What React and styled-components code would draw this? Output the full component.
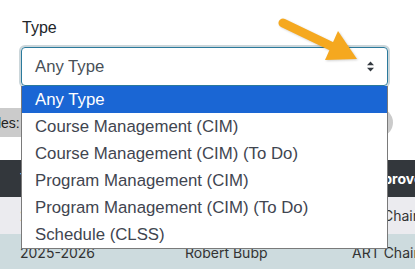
import styled, { createGlobalStyle } from "styled-components";

const GlobalStyle = createGlobalStyle`
    html, body {
        margin: 0;
        padding: 0;
        background: #ffffff;
    }
    body {
        font-family: "Liberation Sans", Arial, sans-serif;
    }
`;

const Page = styled.div`
    position: relative;
    width: 415px;
    height: 269px;
    overflow: hidden;
    background: #ffffff;
`;

const Field = styled.div`
    display: flex;
    flex-direction: column;
    padding: 18px 0 0 21px;
`;

const Label = styled.div`
    font-size: 16px;
    line-height: 20px;
    color: #212529;
    margin-left: 1px;
    margin-bottom: 9px;
`;

const Select = styled.div`
    box-sizing: border-box;
    width: 367px;
    height: 39px;
    display: flex;
    align-items: center;
    justify-content: space-between;
    padding: 0 12px 0 13px;
    border: 1px solid #2b7a9c;
    border-radius: 4px;
    box-shadow: 0 0 0 2px #cbd6da;
    font-size: 16.7px;
    color: #495057;
`;

const FilterBar = styled.div`
    display: flex;
    align-items: center;
    width: 420px;
    height: 29px;
    margin: 22px 0 0 -27px;
    background: #cbcbcb;
    border-radius: 0 15px 15px 0;
    font-size: 14px;
    color: #222;
`;

const FilterLabel = styled.span`
    padding-left: 7px;
`;

const Table = styled.div`
    margin-top: 23px;
    font-family: Inter, "Liberation Sans", sans-serif;
    font-size: 14px;
`;

const Row = styled.div`
    display: grid;
    grid-template-columns: 165px 167px 1fr;
    align-items: center;
    height: 37px;
    padding-left: 20px;
    white-space: nowrap;
    background: ${(p) => p.$bg};
    color: ${(p) => (p.$head ? "#ffffff" : "#333333")};
    font-weight: ${(p) => (p.$head ? 700 : 400)};
`;

const HeadCell = styled.span`
    padding-left: ${(p) => p.$indent || 0}px;
`;

const Menu = styled.div`
    position: absolute;
    left: 21px;
    top: 86px;
    box-sizing: border-box;
    width: 367px;
    background: #ffffff;
    border: 1px solid #7a7a7a;
    border-top: none;
    font-size: 16.8px;
`;

const Option = styled.div`
    height: 27px;
    line-height: 27px;
    padding-left: 13px;
    white-space: nowrap;
    background: ${(p) => (p.$active ? "#1a66d4" : "transparent")};
    color: ${(p) => (p.$active ? "#ffffff" : "#3f4550")};
`;

const Pointer = styled.svg`
    position: absolute;
    left: 0;
    top: 0;
    filter: drop-shadow(1px 1px 1px rgba(0, 0, 0, 0.18));
`;

const options = [
    "Any Type",
    "Course Management (CIM)",
    "Course Management (CIM) (To Do)",
    "Program Management (CIM)",
    "Program Management (CIM) (To Do)",
    "Schedule (CLSS)",
];

function Caret() {
    return (
        <svg width="9" height="11" viewBox="0 0 9 11">
            <path d="M4.5 0.5 L8 4.3 L1 4.3 Z M4.5 10.5 L8 6.7 L1 6.7 Z" fill="#343a40" />
        </svg>
    );
}

export default function App() {
    return (
        <Page>
            <GlobalStyle />
            <Field>
                <Label>Type</Label>
                <Select>
                    <span>Any Type</span>
                    <Caret />
                </Select>
            </Field>
            <FilterBar>
                <FilterLabel>Roles:</FilterLabel>
            </FilterBar>
            <Table>
                <Row $head $bg="#33373c">
                    <HeadCell>Year</HeadCell>
                    <HeadCell>Name</HeadCell>
                    <HeadCell $indent={12}>Approver</HeadCell>
                </Row>
                <Row $bg="#ebebef">
                    <span>2025-2026</span>
                    <span>Robert Bubp</span>
                    <span>Arts Chair</span>
                </Row>
                <Row $bg="#cddbde">
                    <span>2025-2026</span>
                    <span>Robert Bubp</span>
                    <span>ART Chair</span>
                </Row>
            </Table>
            <Menu>
                {options.map((o, i) => (
                    <Option key={o} $active={i === 0}>
                        {o}
                    </Option>
                ))}
            </Menu>
            <Pointer width="415" height="269" viewBox="0 0 415 269">
                <line x1="283" y1="23" x2="333" y2="47" stroke="#f5a81f" strokeWidth="9" strokeLinecap="round" />
                <polygon points="338,31 325,60 357,59" fill="#f5a81f" />
            </Pointer>
        </Page>
    );
}
